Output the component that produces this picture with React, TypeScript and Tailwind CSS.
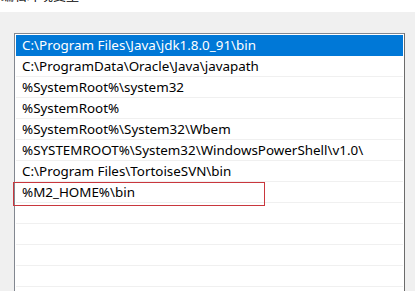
const paths = [
  "C:\\Program Files\\Java\\jdk1.8.0_91\\bin",
  "C:\\ProgramData\\Oracle\\Java\\javapath",
  "%SystemRoot%\\system32",
  "%SystemRoot%",
  "%SystemRoot%\\System32\\Wbem",
  "%SYSTEMROOT%\\System32\\WindowsPowerShell\\v1.0\\",
  "C:\\Program Files\\TortoiseSVN\\bin",
  "%M2_HOME%\\bin",
];

export default function App() {
  return (
    <div className="w-[415px] h-[291px] overflow-hidden bg-[#f0f0f0] font-['Noto_Sans','Noto_Sans_CJK_SC',sans-serif] text-[13.4px] text-black">
      {/* dialog title, cut off at the top */}
      <div className="h-[12px] bg-white overflow-hidden">
        <div className="mt-[-13px] pl-[1px] text-[13px] leading-[16px]">编辑环境变量</div>
      </div>

      <div className="pl-[14px] pr-[10px] pt-[21px]">
        <div className="relative border border-[#828790] border-r-[#6b6b6b] bg-white h-[280px] p-[1px]">
          {paths.map((p, i) => (
            <div
              key={p}
              className={
                i === 0
                  ? "h-[21px] pl-[6px] flex items-center bg-[#0078d7] text-white border-b border-[#0078d7]"
                  : "h-[21px] pl-[6px] flex items-center border-b border-[#f0f0f0]"
              }
            >
              {p}
            </div>
          ))}
          {[0, 1, 2, 3, 4].map((n) => (
            <div key={n} className="h-[21px] border-b border-[#f0f0f0]" />
          ))}
          {/* red annotation box around the new entry */}
          <div className="absolute left-[-2px] top-[148px] w-[252px] h-[24px] border-[1.5px] border-[#c9373d] pointer-events-none" />
        </div>
      </div>
    </div>
  );
}
